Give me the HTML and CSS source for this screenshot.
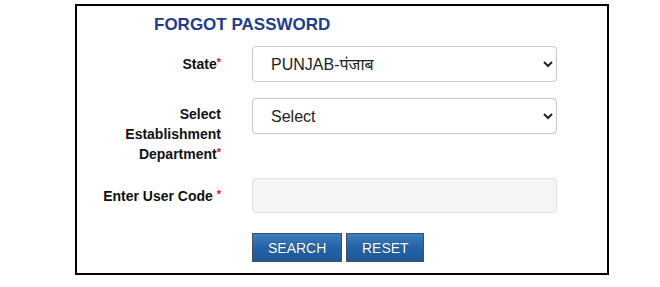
FILE: index.html
```html
<!DOCTYPE html>
<html>
<head>
<meta charset="utf-8">
<link rel="stylesheet" href="styles.css">
</head>
<body>
<div class="panel">
  <h2 class="title">FORGOT PASSWORD</h2>
  <div class="row row-state">
    <label class="label">State<span class="req">*</span></label>
    <div class="control">
      <select class="select"><option>PUNJAB-पंजाब</option></select>
    </div>
  </div>
  <div class="row row-dept">
    <label class="label label-multi">Select<br>Establishment<br>Department<span class="req">*</span></label>
    <div class="control">
      <select class="select"><option>Select</option></select>
    </div>
  </div>
  <div class="row row-code">
    <label class="label">Enter User Code <span class="req">*</span></label>
    <div class="control">
      <input class="input" type="text">
    </div>
  </div>
  <div class="row row-buttons">
    <div class="label"></div>
    <div class="control buttons">
      <button class="btn btn-search">SEARCH</button>
      <button class="btn btn-reset">RESET</button>
    </div>
  </div>
</div>
</body>
</html>
```

FILE: styles.css
```css
html, body {
  margin: 0;
  padding: 0;
  background: #fff;
}
body {
  font-family: "Liberation Sans", Arial, sans-serif;
}
.panel {
  box-sizing: border-box;
  margin: 4px 0 0 75px;
  width: 534px;
  height: 271px;
  border: 2px solid #000;
  padding-top: 9px;
}
.title {
  margin: 0 0 11px 77px;
  font-size: 17px;
  line-height: 20px;
  font-weight: bold;
  color: #1f3d8a;
}
.row {
  display: flex;
  align-items: center;
}
.label {
  box-sizing: border-box;
  width: 144px;
  flex: none;
  text-align: right;
  font-size: 14px;
  font-weight: bold;
  line-height: 20px;
  color: #111;
}
.req {
  color: #e01010;
  font-size: 11px;
  vertical-align: top;
  line-height: 16px;
}
.control {
  margin-left: 31px;
  width: 305px;
  flex: none;
}
.row-dept {
  margin-top: 16px;
  align-items: flex-start;
}
.label-multi {
  padding-top: 6px;
}
.row-code {
  margin-top: 14px;
}
.row-buttons {
  margin-top: 20px;
}
.select {
  box-sizing: border-box;
  width: 305px;
  height: 36px;
  border: 1px solid #c8c8c8;
  border-radius: 4px;
  background: #fff;
  padding: 0 12px 0 14px;
  font-family: "Liberation Sans", "Noto Sans", Arial, sans-serif;
  font-size: 16px;
  color: #222;
  box-shadow: 0 0 1px rgba(0,0,0,0.1);
}
.input {
  box-sizing: border-box;
  display: block;
  width: 305px;
  height: 35px;
  border: 1px solid #e0e0e0;
  border-radius: 4px;
  background: #f5f5f5;
  padding: 0 14px;
  font-size: 16px;
}
.buttons {
  display: flex;
  gap: 4px;
}
.btn {
  box-sizing: border-box;
  height: 29px;
  padding: 0 15px;
  border: 1px solid #4a4d52;
  background: linear-gradient(#3d7fc3, #2463a6 50%, #1d5899);
  color: #fff;
  font-family: "Liberation Sans", Arial, sans-serif;
  font-size: 14px;
  text-shadow: 0 0 1px rgba(0,0,0,0.6);
  border-radius: 0;
}
.btn-search {
  width: 90px;
}
.btn-reset {
  width: 78px;
}
```
